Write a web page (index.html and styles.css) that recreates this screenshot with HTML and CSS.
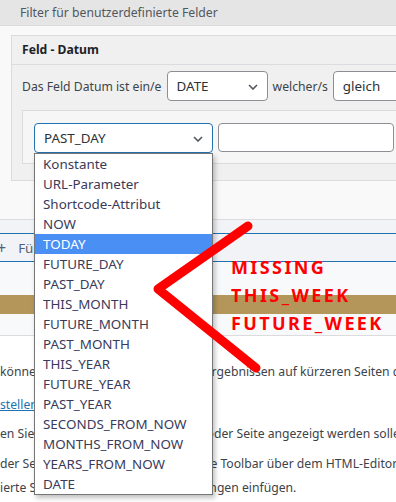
FILE: index.html
```html
<!DOCTYPE html>
<html lang="de">
<head>
    <meta charset="UTF-8">
    <title>Filter für benutzerdefinierte Felder</title>
    <link rel="stylesheet" href="styles.css">
</head>
<body>
    <div class="filter-title">Filter für benutzerdefinierte Felder</div>
    <div class="filter-body">
        <div class="field-box">
            <div class="field-head">Feld - Datum</div>
            <div class="field-row">
                <span>Das Feld Datum ist ein/e</span>
                <div class="select select-type">DATE
                    <svg class="chev" width="10" height="6" viewBox="0 0 10 6"><path d="M1 1l4 4 4-4" fill="none" stroke="#50575e" stroke-width="1.6"/></svg>
                </div>
                <span>welcher/s</span>
                <div class="select select-op">gleich</div>
            </div>
            <div class="cond-box">
                <div class="select-wrap">
                    <div class="select select-value">PAST_DAY
                        <svg class="chev" width="10" height="6" viewBox="0 0 10 6"><path d="M1 1l4 4 4-4" fill="none" stroke="#50575e" stroke-width="1.6"/></svg>
                    </div>
                    <!-- open dropdown list -->
                    <ul class="options">
                        <li>Konstante</li>
                        <li>URL-Parameter</li>
                        <li>Shortcode-Attribut</li>
                        <li>NOW</li>
                        <li class="hover">TODAY</li>
                        <li>FUTURE_DAY</li>
                        <li>PAST_DAY</li>
                        <li>THIS_MONTH</li>
                        <li>FUTURE_MONTH</li>
                        <li>PAST_MONTH</li>
                        <li>THIS_YEAR</li>
                        <li>FUTURE_YEAR</li>
                        <li>PAST_YEAR</li>
                        <li>SECONDS_FROM_NOW</li>
                        <li>MONTHS_FROM_NOW</li>
                        <li>YEARS_FROM_NOW</li>
                        <li>DATE</li>
                    </ul>
                </div>
                <div class="text-input"></div>
            </div>
        </div>
    </div>
    <div class="toolbar">
        <div class="toolbar-btn"><span class="plus">+</span>Füge Feld hinzu</div>
    </div>
    <div class="spacer"></div>
    <div class="gold-bar"></div>
    <div class="spacer small"></div>
    <div class="text">
        <p class="l1">können Sie nun die Anzahl der Suchergebnissen auf kürzeren Seiten darstellen</p>
        <p class="l2"><a href="#">stellen</a></p>
        <p class="l3">en Sie fest, was oben in den Beitrag oder Seite angezeigt werden sollen</p>
        <p class="l4">der Seite einfügen, nutzen Sie nun die Toolbar über dem HTML-Editor</p>
        <p class="l5">ierte Suchfelder über all die Einstellungen einfügen.</p>
    </div>

    <!-- annotation overlay -->
    <svg class="arrow" width="396" height="502" viewBox="0 0 396 502">
        <polyline points="248,226 158,289 256,368" fill="none" stroke="#ff0000" stroke-width="9" stroke-linecap="round" stroke-linejoin="round"/>
    </svg>
    <div class="note">MISSING<br>THIS_WEEK<br>FUTURE_WEEK</div>
</body>
</html>
```

FILE: styles.css
```css
body {
    margin: 0;
    width: 396px;
    height: 502px;
    overflow: hidden;
    position: relative;
    background: #fff;
    color: #3c434a;
    font-family: "Noto Sans", sans-serif;
    font-size: 12.2px;
}
.filter-title {
    height: 25px;
    line-height: 25px;
    padding-left: 20px;
    background: #e5e5e5;
    color: #50575e;
    border-bottom: 1px solid #dcdcde;
}
.filter-body {
    background: #f9f9f9;
    padding: 9px 0 38px 11px;
    border-bottom: 1px solid #dcdcde;
}
.field-box {
    width: 420px;
    background: #f0f0f0;
    border: 1px solid #dcdcde;
}
.field-head {
    height: 28px;
    line-height: 28px;
    padding-left: 10px;
    font-weight: bold;
    color: #1d2327;
    border-bottom: 1px solid #dcdcde;
}
.field-row {
    display: flex;
    align-items: center;
    gap: 5px;
    padding: 6px 10px 9px;
    white-space: nowrap;
}
.select {
    position: relative;
    box-sizing: border-box;
    height: 30px;
    line-height: 28px;
    padding-left: 9px;
    background: #fff;
    border: 1px solid #8c8f94;
    border-radius: 4px;
    color: #2c3338;
    font-size: 13.4px;
}
.chev {
    position: absolute;
    right: 9px;
    top: 12px;
}
.select-type {
    width: 102px;
}
.select-op {
    width: 90px;
}
.cond-box {
    display: flex;
    gap: 5px;
    margin: 0 0 16px 10px;
    padding: 12px 0 10px 11px;
    background: #f6f6f6;
    border: 1px solid #dcdcde;
}
.select-wrap {
    position: relative;
}
.select-value {
    width: 179px;
    border-color: #2271b1;
}
.text-input {
    box-sizing: border-box;
    width: 176px;
    height: 29px;
    background: #fff;
    border: 1px solid #8c8f94;
    border-radius: 4px;
}
.options {
    position: absolute;
    left: 0;
    top: 30px;
    width: 179px;
    box-sizing: border-box;
    margin: 0;
    padding: 0;
    list-style: none;
    background: #fff;
    border: 1px solid #767676;
    box-shadow: 2px 3px 5px rgba(0, 0, 0, 0.25);
    z-index: 2;
}
.options li {
    height: 20px;
    line-height: 20px;
    padding-left: 8px;
    color: #3a3a5a;
    font-size: 13.4px;
}
.options li.hover {
    background: #4a8ff4;
    color: #fff;
}
.toolbar {
    background: #f2f3f7;
    padding: 13px 0 0;
}
.toolbar-btn {
    display: flex;
    align-items: center;
    gap: 12px;
    height: 27px;
    margin-left: -4px;
    width: 420px;
    border: 1px solid #2271b1;
    color: #50627a;
    font-size: 13.4px;
    white-space: nowrap;
}
.plus {
    font-size: 16px;
}
.spacer {
    height: 33px;
    background: #f8f9fb;
}
.spacer.small {
    height: 21px;
    border-bottom: 1px solid #dcdcde;
}
.gold-bar {
    height: 19px;
    background: #b5965a;
}
.text {
    white-space: nowrap;
}
.text p {
    margin: 0;
    line-height: 20px;
}
.text p.l1 {
    margin-top: 26px;
    height: 33px;
}
.text p.l2 {
    height: 29px;
}
.text p.l3 {
    height: 30px;
}
.text p.l4 {
    height: 24px;
}
.text a {
    color: #2271b1;
}
.arrow {
    position: absolute;
    left: 0;
    top: 0;
    z-index: 3;
}
.note {
    position: absolute;
    left: 231px;
    top: 253px;
    color: #ff0000;
    font-weight: bold;
    font-size: 18px;
    line-height: 28px;
    letter-spacing: 2.4px;
    z-index: 3;
}
```
